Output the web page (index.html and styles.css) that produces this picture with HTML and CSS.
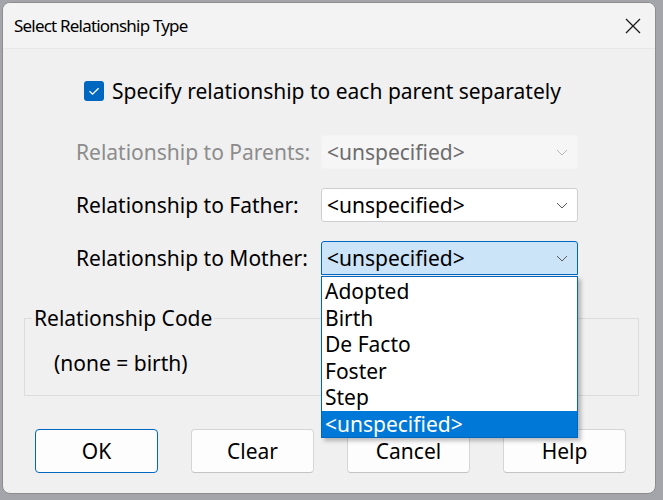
FILE: index.html
```html
<!DOCTYPE html>
<html>
<head>
<meta charset="utf-8">
<link rel="stylesheet" href="styles.css">
</head>
<body>
<div class="dialog">
  <div class="titlebar">
    <span class="title">Select Relationship Type</span>
    <svg class="close" width="16" height="16" viewBox="0 0 16 16"><path d="M1 1L15 15M15 1L1 15" stroke="#1a1a1a" stroke-width="1.3" fill="none"/></svg>
  </div>
  <div class="content">
    <div class="check-row">
      <span class="checkbox"><svg width="20" height="20" viewBox="0 0 20 20"><path d="M5.5 10.2L8.6 13.2L14.6 7.2" stroke="#fff" stroke-width="1.3" fill="none"/></svg></span>
      <span class="check-label">Specify relationship to each parent separately</span>
    </div>
    <div class="form">
      <div class="row">
        <span class="label disabled">Relationship to Parents:</span>
        <div class="combo combo-disabled"><span class="value">&lt;unspecified&gt;</span><svg class="chev" width="12" height="7" viewBox="0 0 12 7"><path d="M1 1L6 6L11 1" stroke="#b8b8b8" stroke-width="1" fill="none"/></svg></div>
      </div>
      <div class="row">
        <span class="label">Relationship to Father:</span>
        <div class="combo"><span class="value">&lt;unspecified&gt;</span><svg class="chev" width="12" height="7" viewBox="0 0 12 7"><path d="M1 1L6 6L11 1" stroke="#5a5a5a" stroke-width="1" fill="none"/></svg></div>
      </div>
      <div class="row">
        <span class="label">Relationship to Mother:</span>
        <div class="combo combo-open"><span class="value">&lt;unspecified&gt;</span><svg class="chev" width="12" height="7" viewBox="0 0 12 7"><path d="M1 1L6 6L11 1" stroke="#5a5a5a" stroke-width="1" fill="none"/></svg>
          <ul class="dropdown">
            <li>Adopted</li>
            <li>Birth</li>
            <li>De Facto</li>
            <li>Foster</li>
            <li>Step</li>
            <li class="selected">&lt;unspecified&gt;</li>
          </ul>
        </div>
      </div>
    </div>
    <fieldset class="group">
      <legend>Relationship Code</legend>
      <div class="note">(none = birth)</div>
    </fieldset>
    <div class="buttons">
      <button class="btn btn-default">OK</button>
      <button class="btn">Clear</button>
      <button class="btn">Cancel</button>
      <button class="btn">Help</button>
    </div>
  </div>
</div>
</body>
</html>
```

FILE: styles.css
```css
html, body {
  margin: 0;
  height: 100%;
}
body {
  background: #a3a5ab;
  padding: 2px 0 0 2px;
  box-sizing: border-box;
  font-family: "Noto Sans", "Open Sans", sans-serif;
  color: #000;
  overflow: hidden;
}
.dialog {
  width: 654px;
  height: 492px;
  box-sizing: border-box;
  background: #f0f0f0;
  border: 1px solid #8d8d8d;
  border-radius: 8px;
  overflow: hidden;
  display: flex;
  flex-direction: column;
}
.titlebar {
  height: 45px;
  flex: none;
  background: #f3f3f3;
  border-bottom: 1px solid #e8e8e8;
  display: flex;
  align-items: center;
  justify-content: space-between;
  padding: 0 14px 0 11px;
}
.title {
  font-size: 17px;
  letter-spacing: -0.8px;
}
.close {
  display: block;
}
.content {
  flex: 1;
  display: flex;
  flex-direction: column;
}
.check-row {
  margin: 32px 0 0 81px;
  height: 20px;
  display: flex;
  align-items: center;
  gap: 8px;
}
.checkbox {
  width: 20px;
  height: 20px;
  border-radius: 3px;
  background: #0067c0;
  display: block;
  flex: none;
}
.checkbox svg { display: block; }
.check-label {
  font-size: 21px;
  white-space: nowrap;
}
.form {
  margin-top: 34px;
  padding-left: 73px;
  display: flex;
  flex-direction: column;
  gap: 19px;
}
.row {
  display: flex;
  align-items: center;
  height: 34px;
}
.label {
  width: 245px;
  font-size: 21px;
  white-space: nowrap;
}
.label.disabled { color: #8c8c8c; }
.combo {
  width: 257px;
  height: 34px;
  box-sizing: border-box;
  border: 1px solid #cfcfcf;
  border-radius: 3px;
  background: #fff;
  position: relative;
  display: flex;
  align-items: center;
  justify-content: space-between;
  padding: 0 9px 0 5px;
  font-size: 21px;
}
.combo-disabled {
  background: #f6f6f6;
  border-color: #f3f3f3;
  color: #6d6d6d;
}
.combo-open {
  background: #cce4f7;
  border-color: #0067c0;
  border-radius: 3px 3px 0 0;
}
.value { white-space: nowrap; }
.chev { display: block; }
.dropdown {
  position: absolute;
  left: -1px;
  top: 34px;
  width: 257px;
  margin: 0;
  padding: 1px 0 0;
  list-style: none;
  background: #fff;
  border: 1px solid #0067c0;
  box-sizing: border-box;
  box-shadow: 3px 3px 4px rgba(0,0,0,0.25);
  z-index: 2;
}
.dropdown li {
  height: 26.5px;
  line-height: 26.5px;
  padding-left: 3px;
  font-size: 21px;
  white-space: nowrap;
}
.dropdown li.selected {
  background: #0078d7;
  color: #fff;
}
.group {
  margin: 29px 0 0 21px;
  width: 615px;
  height: 92px;
  box-sizing: border-box;
  border: 1px solid #dcdcdc;
  padding: 0 0 0 29px;
}
.group legend {
  font-size: 21px;
  padding: 0 2px;
  margin-left: -22px;
}
.note {
  font-size: 21px;
  margin-top: 17px;
}
.buttons {
  margin: 33px 0 0 32px;
  display: flex;
  gap: 33px;
}
.btn {
  width: 123px;
  height: 44px;
  box-sizing: border-box;
  font-family: inherit;
  font-size: 21px;
  color: #000;
  background: #fdfdfd;
  border: 1px solid #d5d5d5;
  border-bottom-color: #c4c4c4;
  border-radius: 4px;
  padding: 0;
}
.btn-default {
  border: 1px solid #0067c0;
}
```
